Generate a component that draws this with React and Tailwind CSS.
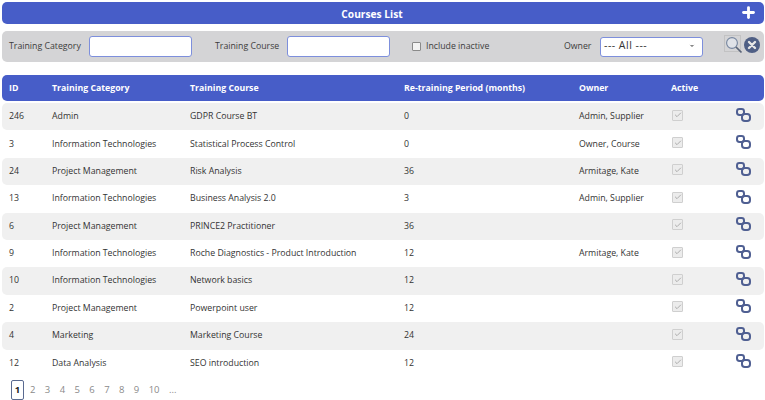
import { Plus, Check, ChevronDown } from "lucide-react";

const courses = [
  { id: 246, category: "Admin", course: "GDPR Course BT", period: 0, owner: "Admin, Supplier" },
  { id: 3, category: "Information Technologies", course: "Statistical Process Control", period: 0, owner: "Owner, Course" },
  { id: 24, category: "Project Management", course: "Risk Analysis", period: 36, owner: "Armitage, Kate" },
  { id: 13, category: "Information Technologies", course: "Business Analysis 2.0", period: 3, owner: "Admin, Supplier" },
  { id: 6, category: "Project Management", course: "PRINCE2 Practitioner", period: 36, owner: "" },
  { id: 9, category: "Information Technologies", course: "Roche Diagnostics - Product Introduction", period: 12, owner: "Armitage, Kate" },
  { id: 10, category: "Information Technologies", course: "Network basics", period: 12, owner: "" },
  { id: 2, category: "Project Management", course: "Powerpoint user", period: 12, owner: "" },
  { id: 4, category: "Marketing", course: "Marketing Course", period: 24, owner: "" },
  { id: 12, category: "Data Analysis", course: "SEO introduction", period: 12, owner: "" },
];

const gridCols = "grid grid-cols-[43px_138px_214px_175px_92px_65px_1fr] items-center";

const LinkIcon = () => (
  <svg width="15" height="14" viewBox="0 0 15 14" fill="none" stroke="#4f5f92" strokeWidth="2">
    <rect x="1" y="1" width="7" height="6" rx="2.4" />
    <rect x="6" y="6" width="8" height="7" rx="2.8" />
  </svg>
);

const SearchIcon = () => (
  <svg width="20" height="20" viewBox="0 0 20 20" fill="none">
    <rect x="0.5" y="0.5" width="16" height="16" stroke="#a0a0a0" strokeWidth="0.7" strokeDasharray="1 1" />
    <circle cx="8" cy="8" r="5.4" stroke="#75859f" strokeWidth="1.1" fill="#dfe2e8" />
    <path d="M12 12 L17.5 17.5" stroke="#5a6478" strokeWidth="1.7" />
  </svg>
);

const ClearIcon = () => (
  <svg width="16" height="16" viewBox="0 0 16 16">
    <circle cx="8" cy="8" r="8" fill="#4f5f85" />
    <path d="M5 5 L11 11 M11 5 L5 11" stroke="#e6e6e6" strokeWidth="2.4" strokeLinecap="round" />
  </svg>
);

const App = () => {
  return (
    <div className="w-[765px] h-[400px] overflow-hidden bg-white pt-[2px] pl-[2px] pr-px font-['Open_Sans','Noto_Sans',sans-serif] text-[8.75px] text-[#333]">
      {/* Title */}
      <div className="relative flex h-[22px] items-center justify-center rounded-[5px] bg-[#475dc8] pr-[22px] pt-[3px] text-[10.2px] font-bold text-white">
        Courses List
        <Plus className="absolute right-[7px] top-[2px] size-[17px]" strokeWidth={4} />
      </div>

      {/* Filters */}
      <div className="mt-[7px] flex h-[31px] items-center rounded-[5px] bg-[#d4d4d6] pl-[7px]">
        <span className="w-[80px] pt-[1px] text-[#3c3c3c]">Training Category</span>
        <input className="h-[21px] w-[103px] rounded-[3px] border border-[#7d8fdc] bg-white" />
        <span className="ml-[23px] w-[72px] pt-[1px] text-[#3c3c3c]">Training Course</span>
        <input className="h-[21px] w-[103px] rounded-[3px] border border-[#7d8fdc] bg-white" />
        <span className="ml-[22px] size-[9px] rounded-[1px] border border-[#8a8a8a] bg-[#f3f3f3]" />
        <span className="ml-[5px] w-[92px] pt-[1px] text-[#3c3c3c]">Include inactive</span>
        <span className="ml-[46px] w-[36px] pt-[1px] text-[#3c3c3c]">Owner</span>
        <div className="flex h-[20px] w-[103px] items-center justify-between rounded-[3px] border border-[#7d8fdc] bg-white pb-[2px] pl-[3px] pr-[6px] text-[10.5px] tracking-[0.5px]">
          <span>--- All ---</span>
          <ChevronDown className="size-[8px] text-[#888]" fill="#888" strokeWidth={1} />
        </div>
        <div className="ml-[21px] -mt-[3px] flex items-center">
          <SearchIcon />
          <ClearIcon />
        </div>
      </div>

      {/* Table */}
      <div className={`${gridCols} mt-[13px] h-[26px] rounded-[5px] bg-[#475dc8] pl-[7px] pt-[2px] font-bold text-white`}>
        <span>ID</span>
        <span>Training Category</span>
        <span>Training Course</span>
        <span>Re-training Period (months)</span>
        <span>Owner</span>
        <span>Active</span>
        <span />
      </div>
      <div className="mt-[2px]">
        {courses.map((row, i) => (
          <div
            key={row.id}
            className={`${gridCols} h-[27.4px] rounded-[5px] pl-[7px] ${i % 2 === 0 ? "bg-[#f0f0f0]" : "bg-white"}`}
          >
            <span>{row.id}</span>
            <span className="whitespace-nowrap">{row.category}</span>
            <span className="whitespace-nowrap">{row.course}</span>
            <span>{row.period}</span>
            <span className="whitespace-nowrap">{row.owner}</span>
            <span className="ml-px mb-[3px] flex size-[11px] items-center justify-center rounded-[1px] border border-[#cfcfcf] bg-[#ececec]">
              <Check className="size-[8px] text-[#a0a0a0]" strokeWidth={2.5} />
            </span>
            <span className="mb-[4px] flex">
              <LinkIcon />
            </span>
          </div>
        ))}
      </div>

      {/* Pagination */}
      <div className="mt-[3px] flex h-[20px] items-center pl-[9px] text-[9.5px] text-[#8a8a8a]">
        <span className="mr-[6px] flex h-[20px] w-[13px] items-center justify-center rounded-[2px] border border-[#5a6a90] font-bold text-[#222]">1</span>
        {[2, 3, 4, 5, 6, 7, 8, 9, 10, "..."].map((p) => (
          <span key={p} className="mr-[9.4px]">{p}</span>
        ))}
      </div>
    </div>
  );
};

export default App;
